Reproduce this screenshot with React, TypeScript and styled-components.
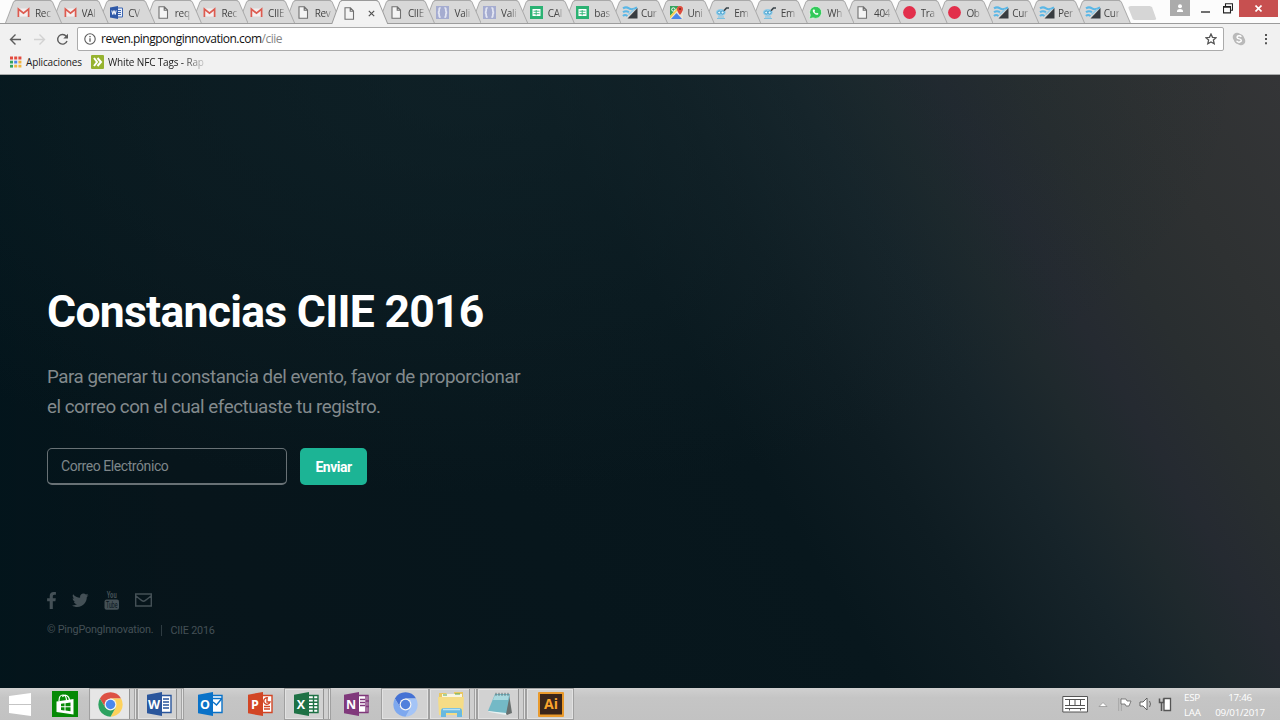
import React from "react";
import styled, { createGlobalStyle, css } from "styled-components";
import { FaTwitter } from "react-icons/fa";

const Global = createGlobalStyle`
  * { box-sizing: border-box; }
  body { margin: 0; overflow: hidden; }
`;

const ui = `"Open Sans", "Noto Sans", sans-serif`;

const Screen = styled.div`
  width: 1280px;
  height: 720px;
  display: flex;
  flex-direction: column;
  overflow: hidden;
`;

/* ---------- browser: tab strip ---------- */

const TabStrip = styled.div`
  height: 24px;
  display: flex;
  align-items: flex-start;
  padding-left: 5px;
  background: #fcfcfc;
  box-shadow: inset 0 -1px #9c9c9c;
`;

const TabBody = styled.div<{ $order: number; $active?: boolean; $light?: boolean }>`
  position: relative;
  z-index: ${(p) => (p.$active ? 40 : 30 - p.$order)};
  flex: none;
  width: 57px;
  height: ${(p) => (p.$active ? 24 : 23)}px;
  margin-right: ${(p) => (p.$order < 19 ? -10.4 : -11.2)}px;
  padding: 2px 0 0 12px;
  display: flex;
  align-items: center;
  background: ${(p) => (p.$active ? "#9a9a9a" : "#a9a9a9")};
  clip-path: polygon(0 100%, 8px 2px, 10px 0, 46px 0, 48px 2px, 100% 100%);

  &::before {
    content: "";
    position: absolute;
    inset: 0;
    background: ${(p) => (p.$active ? "#f2f2f2" : p.$light ? "#e0e0e0" : "#d8d8d8")};
    clip-path: polygon(1px 100%, 9px 2px, 11px 1px, 45px 1px, 47px 2px, calc(100% - 1px) 100%);
  }
  > * { position: relative; }
`;

const TabIcon = styled.svg`
  flex: none;
  width: 13px;
  height: 13px;
  display: block;
  overflow: visible;
`;

const TabTitle = styled.span`
  flex: none;
  margin-left: 5px;
  white-space: nowrap;
  font: 10px/14px ${ui};
  letter-spacing: -0.3px;
  color: #444;
  mask-image: linear-gradient(90deg, #000 60%, rgba(0, 0, 0, 0.25));
`;

const TabClose = styled.svg`
  width: 7px;
  height: 7px;
  margin-left: 12px;
`;

const NewTab = styled.div`
  width: 29px;
  height: 14px;
  margin: 6px 0 0 8px;
  border-radius: 3px;
  background: #d6d6d6;
  clip-path: polygon(0 0, 76% 0, 84% 8%, 100% 100%, 24% 100%, 18% 94%);
`;

const WindowControls = styled.div`
  margin-left: auto;
  padding-right: 2px;
  display: flex;
`;

const Control = styled.div<{ $w: number; $h: number; $bg?: string }>`
  width: ${(p) => p.$w}px;
  height: ${(p) => p.$h}px;
  display: flex;
  align-items: center;
  justify-content: center;
  background: ${(p) => p.$bg ?? "transparent"};
  svg { display: block; }
`;

type IconKind =
  | "gmail" | "word" | "page" | "braces" | "sheet" | "wave" | "maps" | "robot" | "whatsapp" | "dot";

const glyphs: Record<IconKind, React.ReactNode> = {
  gmail: (
    <>
      <path d="M1 2.5h11v8H1z" fill="#f3eeee" />
      <path d="M1.400 11V3l5.100 4.200 5.100-4.200v8" fill="none" stroke="#dd5b50" strokeWidth="1.700" />
    </>
  ),
  word: (
    <>
      <path d="M6 2h6.5v9H6z" fill="#e9effa" stroke="#3c65b0" />
      <path d="M8 4.5h3M8 6.5h3M8 8.5h3" stroke="#3c65b0" />
      <path d="M0 1.5 8 0v13L0 11.5z" fill="#2f59a8" />
      <path d="m1.8 4.5 1 4 1.2-4 1.2 4 1-4" fill="none" stroke="#fff" />
    </>
  ),
  page: <path d="M2 .8h5.4L10.500 4v8.200H2zM7.200 1v3.200h3.300" fill="#f4f4f4" stroke="#707070" strokeWidth="1.1" />,
  braces: (
    <>
      <path d="M0 0h13v13H0z" fill="#a5acd0" />
      <path d="M4.600 1.800Q3 1.800 3.200 4T2 6.500Q3.300 6.800 3.200 9t1.400 2.200M8.400 1.800Q10 1.800 9.800 4T11 6.500Q9.700 6.800 9.800 9t-1.400 2.200" fill="none" stroke="#e2e5f2" strokeWidth="1.800" />
    </>
  ),
  sheet: (
    <>
      <path d="M0 0h13v13H0z" fill="#2bb273" />
      <path d="M2.5 3h8v7h-8z" fill="#fff" />
      <path d="M3.5 5.2h6M3.5 7.7h6M6.2 4v5.4" stroke="#2bb273" strokeWidth=".9" />
    </>
  ),
  wave: (
    <>
      <path d="M0 2.400q3-2 6 0t8-1M0 6.200q3-2 6 0M0 10q2-2 4.500 0" fill="none" stroke="#5bb7e6" strokeWidth="2.100" />
      <path d="M14.500 2v10.500H4.500z" fill="#383c40" />
      <path d="m5.500 8.500 6-5.500" stroke="#8fcbe8" strokeWidth="1.500" />
    </>
  ),
  maps: (
    <>
      <path d="M0 0h13v13H0z" fill="#e8e4da" />
      <path d="M0 0h9L0 10z" fill="#35a45e" />
      <path d="M1 13 6.500 7l5.500 6z" fill="#4a86e8" />
      <path d="m0 10 9-10 1.500 1L0 12.500z" fill="#f7cf4a" />
      <circle cx="3.400" cy="3.500" r="1.700" fill="none" stroke="#fff" />
      <path d="M10 9Q6.800 5 7 3a3 3 0 0 1 6 0q0 2-3 6" fill="#dc4b3e" />
      <circle cx="10" cy="3" r="1" fill="#7d231c" />
    </>
  ),
  robot: (
    <>
      <ellipse cx="4.800" cy="6.500" rx="4.800" ry="3.400" fill="#8fcbe9" />
      <circle cx="3.200" cy="6.500" r="1.500" fill="#e4f5fc" stroke="#2d92c4" strokeWidth=".8" />
      <circle cx="6.600" cy="6.500" r="1.500" fill="#e4f5fc" stroke="#2d92c4" strokeWidth=".8" />
      <path d="M2 11h6M1 12.500h8" stroke="#7cc0e0" />
      <path d="m8 4.800 2.500-2.800H13" fill="none" stroke="#3b454b" strokeWidth="1.700" />
    </>
  ),
  whatsapp: (
    <>
      <path d="m.3 12.900 1-3.700A6 6 0 1 1 4 11.800z" fill="#33c95a" stroke="#eefaf0" strokeWidth=".6" />
      <path d="M4.300 3.600q-1.400 1.500.8 3.700t4 1.200l.3-1-1.500-.8-.8.800Q5.800 6.800 5.500 5.600l.6-.7-.6-1.500z" fill="#fff" />
    </>
  ),
  dot: <circle cx="6.500" cy="6.500" r="6.400" fill="#e22f4b" />,
};

const tabs: { icon: IconKind; title?: string; active?: boolean; light?: boolean }[] = [
  { icon: "gmail", title: "Rec" },
  { icon: "gmail", title: "VAl" },
  { icon: "word", title: "CV" },
  { icon: "page", title: "req", light: true },
  { icon: "gmail", title: "Rec" },
  { icon: "gmail", title: "CIIE" },
  { icon: "page", title: "Rev" },
  { icon: "page", active: true },
  { icon: "page", title: "CIIE" },
  { icon: "braces", title: "Vali" },
  { icon: "braces", title: "Vali" },
  { icon: "sheet", title: "CAl" },
  { icon: "sheet", title: "bas" },
  { icon: "wave", title: "Cur" },
  { icon: "maps", title: "Uni" },
  { icon: "robot", title: "Em" },
  { icon: "robot", title: "Em" },
  { icon: "whatsapp", title: "Wh" },
  { icon: "page", title: "404" },
  { icon: "dot", title: "Tra" },
  { icon: "dot", title: "Ob" },
  { icon: "wave", title: "Cur" },
  { icon: "wave", title: "Per" },
  { icon: "wave", title: "Cur" },
];

/* ---------- browser: address and bookmarks ---------- */

const Toolbar = styled.div`
  height: 51px;
  background: #f1f1f1;
  border-bottom: 1px solid #a9abab;
  display: flex;
  flex-direction: column;
`;

const AddressRow = styled.div`
  height: 27px;
  padding: 3px 11px 0 9px;
  display: flex;
  align-items: center;
`;

const NavIcon = styled.svg`
  flex: none;
  width: 13px;
  height: 13px;
  margin-right: 10.5px;
  fill: none;
  stroke-width: 1.4;
`;

const Address = styled.div`
  flex: none;
  width: 1147px;
  height: 24px;
  margin-left: -2.5px;
  padding: 0 6px 0 6px;
  display: flex;
  align-items: center;
  background: #fff;
  border: 1px solid #ababab;
  border-radius: 2px;
  font: 12px/22px ${ui};
  color: #111;
  svg { flex: none; }
`;

const Url = styled.span`
  margin-left: 5px;
  letter-spacing: -0.49px;
  white-space: nowrap;
  em { font-style: normal; color: #858585; }
`;

const Star = styled.svg` margin-left: auto; `;
const Skype = styled.svg` margin-left: 8px; flex: none; `;
const Dots = styled.svg` margin-left: auto; flex: none; margin-right: 1px;`;

const Bookmarks = styled.div`
  display: flex;
  align-items: center;
  height: 16px;
  margin-top: 3px;
  padding-left: 9px;
  font: 10px/14px ${ui};
  letter-spacing: -0.15px;
  color: #1b1b1b;
`;

const Bookmark = styled.div<{ $width: number; $fade?: boolean }>`
  display: flex;
  align-items: center;
  width: ${(p) => p.$width}px;
  white-space: nowrap;
  gap: 4px;
  ${(p) => p.$fade && css`mask-image: linear-gradient(90deg, #000 80%, rgba(0, 0, 0, 0.15));`}
  svg { flex: none; }
`;

/* ---------- page ---------- */

const Page = styled.main`
  height: 613px;
  padding: 213px 0 0 47px;
  font-family: Roboto, sans-serif;
  background:
    radial-gradient(ellipse 760px 420px at 480px 0, rgba(20, 39, 45, 0.6), rgba(14, 30, 36, 0)),
    linear-gradient(90deg, rgba(0, 21, 28, 0.55), rgba(0, 21, 28, 0) 14%),
    linear-gradient(59deg, #07141a 0%, #07161c 38%, #08171d 54%, #0e1c22 62%, #17242a 70%,
      #1f292d 75%, #252a31 79%, #292e30 84%, #2e3132 90%, #343537 100%);
`;

const Title = styled.h1`
  margin: 0;
  font-size: 44.5px;
  line-height: 48px;
  font-weight: 700;
  letter-spacing: -0.73px;
  color: #fff;
  white-space: nowrap;
`;

const Lead = styled.p`
  margin: 27px 0 0;
  font-size: 18.75px;
  line-height: 29.5px;
  letter-spacing: -0.47px;
  color: #838a8d;
  white-space: nowrap;
`;

const Form = styled.div`
  display: flex;
  gap: 13px;
  margin-top: 26px;
`;

const Field = styled.div`
  width: 240px;
  height: 37px;
  padding-left: 13px;
  border: 1px solid #687175;
  border-bottom-width: 2px;
  border-radius: 5px;
  font-size: 14px;
  line-height: 35px;
  letter-spacing: -0.43px;
  color: #7f878a;
`;

const Submit = styled.button`
  width: 67px;
  height: 37px;
  padding: 0;
  border: 0;
  border-radius: 5px;
  background: #1cb495;
  color: #fff;
  font: 700 14px/36px Roboto, sans-serif;
  letter-spacing: -0.5px;
`;

const Social = styled.div`
  height: 20px;
  margin-top: 105px;
  display: flex;
  align-items: center;
  color: #445056;
  svg { display: block; }
`;

const SocialLink = styled.span<{ $w: number; $gap: number }>`
  width: ${(p) => p.$w}px;
  margin-right: ${(p) => p.$gap}px;
`;

const Copyright = styled.div`
  margin-top: 12px;
  display: flex;
  align-items: center;
  font-size: 10.8px;
  line-height: 16px;
  letter-spacing: -0.2px;
  color: #445056;
  span + span {
    margin-left: 8px;
    padding-left: 8px;
    line-height: 11px;
    border-left: 1px solid #2e3b41;
  }
`;

/* ---------- taskbar ---------- */

const Taskbar = styled.div`
  height: 32px;
  display: flex;
  background: linear-gradient(#d0d0d0, #c5c5c5 30%, #c2c2c2);
`;

const Task = styled.div<{ $w: number; $running?: boolean; $bright?: boolean; $stack?: boolean; $nudge?: number }>`
  position: relative;
  flex: none;
  width: ${(p) => p.$w}px;
  height: 32px;
  display: flex;
  align-items: center;
  justify-content: center;
  padding-right: ${(p) => (p.$stack ? 5 : 0)}px;
  padding-left: ${(p) => p.$nudge ?? 0}px;
  ${(p) => p.$running && css`
    border: 1px solid #a0a0a0;
    box-shadow: inset 0 0 0 1px #e2e2e2;
    background: ${p.$bright ? "#e6e6e6" : "#d2d2d2"};
  `}
  ${(p) => p.$stack && css`
    &::after {
      content: "";
      position: absolute;
      right: 1px;
      top: 0;
      bottom: 0;
      width: 4px;
      background: #cfcfcf;
      border-left: 1px solid #939393;
      border-right: 1px solid #a3a3a3;
    }
  `}
  svg { display: block; flex: none; }
`;

const Tray = styled.div`
  margin-left: auto;
  width: 218px;
  display: flex;
  align-items: center;
  svg { flex: none; }
`;

const TrayText = styled.div<{ $w: number }>`
  width: ${(p) => p.$w}px;
  text-align: center;
  font: 9.8px/15px ${ui};
  letter-spacing: -0.25px;
  color: #fff;
  white-space: nowrap;
  padding-top: 2px;
`;

const OfficeIcon = ({ color, letter, children }: { color: string; letter: string; children: React.ReactNode }) => (
  <svg width="25" height="24" viewBox="0 0 25 24">
    <path d="M12 3.500h12v17H12z" fill="#fff" stroke={color} strokeWidth="1.400" />
    <g stroke={color} fill="none" strokeWidth="1.400">{children}</g>
    <path d="M0 2.700 15 0v24L0 21.300z" fill={color} />
    <text x="7" y="16.500" textAnchor="middle" fontFamily="Open Sans, sans-serif" fontWeight="700" fontSize="12.500" fill="#fff">
      {letter}
    </text>
  </svg>
);

const ChromeIcon = ({ colors, core }: { colors: [string, string, string]; core: string }) => (
  <svg width="25" height="25" viewBox="-12.500 -12.500 25 25">
    <path d="M-10.600-6A12.200 12.200 0 0 1 10.600-6L0-6-5.200 3z" fill={colors[0]} />
    <path d="M10.600-6A12.200 12.200 0 0 1 0 12.200L5.200 3 0-6z" fill={colors[1]} />
    <path d="M0 12.200A12.200 12.200 0 0 1-10.600-6L-5.200 3 5.200 3z" fill={colors[2]} />
    <circle r="5.900" fill="#f4f4f4" />
    <circle r="4.700" fill={core} />
  </svg>
);

export default function App() {
  return (
    <Screen>
      <Global />
      <TabStrip>
        {tabs.map((t, i) => (
          <TabBody key={i} $order={i} $active={t.active} $light={t.light}>
            <TabIcon viewBox="0 0 13 13">{glyphs[t.icon]}</TabIcon>
            {t.title && <TabTitle>{t.title}</TabTitle>}
            {t.active && (
              <TabClose viewBox="0 0 7 7">
                <path d="m.8.8 5.400 5.400m0-5.400L.8 6.200" stroke="#555" strokeWidth="1.200" />
              </TabClose>
            )}
          </TabBody>
        ))}
        <NewTab />
        <WindowControls>
          <Control $w={20} $h={16} $bg="#ababab">
            <svg width="8" height="9" viewBox="0 0 8 9">
              <circle cx="4" cy="2.200" r="2" fill="#fff" />
              <path d="M1 8V6.500Q1.200 5 4 5t3 1.500V8z" fill="#fff" />
            </svg>
          </Control>
          <Control $w={31} $h={18}>
            <svg width="9" height="7" viewBox="0 0 9 7"><path d="M0 6h9" stroke="#222" strokeWidth="1.300" /></svg>
          </Control>
          <Control $w={13} $h={17}>
            <svg width="10" height="11" viewBox="0 0 10 11">
              <path d="M2.500 3V.8h7v6.400H8M.5 3.500h7v6.400h-7zM.5 4.300h7" fill="none" stroke="#222" strokeWidth="1.100" />
            </svg>
          </Control>
          <Control $w={5} $h={17} />
          <Control $w={39} $h={17} $bg="#c75050">
            <svg width="7" height="7" viewBox="0 0 7 7"><path d="m.5.5 6 6m0-6-6 6" stroke="#fff" strokeWidth="1.600" /></svg>
          </Control>
        </WindowControls>
      </TabStrip>

      <Toolbar>
        <AddressRow>
          <NavIcon viewBox="0 0 13 13" stroke="#5c5c5c"><path d="M12 6.500H1.500M6.500 1.500l-5 5 5 5" /></NavIcon>
          <NavIcon viewBox="0 0 13 13" stroke="#d2d2d2"><path d="M1 6.500h10.500M6.500 1.500l5 5-5 5" /></NavIcon>
          <NavIcon viewBox="0 0 13 13" stroke="#5c5c5c">
            <path d="M11 8A4.800 4.800 0 1 1 10.300 3.400" /><path d="M12 .8v4.700H7.300z" fill="#5c5c5c" stroke="none" />
          </NavIcon>
          <Address>
            <svg width="12" height="12" viewBox="0 0 12 12">
              <circle cx="6" cy="6" r="5.200" fill="none" stroke="#5a5a5a" strokeWidth="1.100" />
              <path d="M6 5.300v3.500M6 3v1.300" stroke="#5a5a5a" strokeWidth="1.300" />
            </svg>
            <Url>reven.pingponginnovation.com<em>/ciie</em></Url>
            <Star width="12" height="12" viewBox="0 0 12 12">
              <path d="m6 1 1.500 3.300 3.700.4-2.800 2.400.8 3.600L6 8.900l-3.200 1.800.8-3.600L.8 4.700l3.700-.4z" fill="none" stroke="#555" strokeWidth="1.300" />
            </Star>
          </Address>
          <Skype width="14" height="14" viewBox="0 0 14 14">
            <circle cx="5" cy="5" r="4.300" fill="#b9b9b9" />
            <circle cx="9" cy="9" r="4.300" fill="#b9b9b9" />
            <circle cx="7" cy="7" r="5.300" fill="#b9b9b9" />
            <path d="M9.300 4.900Q8.500 3.700 7 3.800q-2 .1-2 1.500T7.100 6.900q2.200.3 2.200 1.700T7 10.200Q5.300 10.200 4.600 8.800" fill="none" stroke="#fff" strokeWidth="1.400" />
          </Skype>
          <Dots width="4" height="12" viewBox="0 0 4 12">
            <path d="M1 1h2v2H1zM1 5h2v2H1zM1 9.300h2v2H1z" fill="#555" />
          </Dots>
        </AddressRow>
        <Bookmarks>
          <Bookmark $width={82}>
            <svg width="13" height="12" viewBox="0 0 13 12">
              <path d="M1 .6h3v2.800H1zM5.200.6h3v2.800h-3zM9.400.6h3v2.800h-3z" fill="#e34b3e" />
              <path d="M1 4.700h3v2.800H1z" fill="#36a35b" /><path d="M5.200 4.700h3v2.800h-3z" fill="#4a86e8" /><path d="M9.400 4.700h3v2.800h-3z" fill="#f0b23c" />
              <path d="M1 8.800h3v2.800H1z" fill="#36a35b" /><path d="M5.200 8.800h3v2.800h-3zM9.400 8.800h3v2.800h-3z" fill="#efb53f" />
            </svg>
            Aplicaciones
          </Bookmark>
          <Bookmark $width={114} $fade>
            <svg width="13" height="14" viewBox="0 0 13 14">
              <rect width="13" height="14" rx="1" fill="#96b32f" />
              <path d="m3 3 3 4-3 4M6.500 3l3.500 4-3.500 4" fill="none" stroke="#fff" strokeWidth="2" />
            </svg>
            White NFC Tags - Rap
          </Bookmark>
        </Bookmarks>
      </Toolbar>

      <Page>
        <Title>Constancias CIIE 2016</Title>
        <Lead>
          Para generar tu constancia del evento, favor de proporcionar
          <br />
          el correo con el cual efectuaste tu registro.
        </Lead>
        <Form>
          <Field>Correo Electrónico</Field>
          <Submit>Enviar</Submit>
        </Form>
        <Social>
          <SocialLink $w={10} $gap={15}>
            <svg width="9" height="17" viewBox="95 0 864 1664" fill="#445056">
              <path d="M959 12v264h-157q-86 0-116 36t-30 108v189h293l-39 296h-254v759h-306v-759h-255v-296h255v-218q0-186 104-288.500t277-102.500q147 0 228 12z" />
            </svg>
          </SocialLink>
          <SocialLink $w={17} $gap={15}><FaTwitter size={16.5} /></SocialLink>
          <SocialLink $w={16} $gap={15}>
            <svg width="16" height="19" viewBox="0 0 16 19">
              <text x="7.700" y="7.300" textAnchor="middle" textLength="10" lengthAdjust="spacingAndGlyphs" fontFamily="Roboto, sans-serif" fontWeight="700" fontSize="9.500" fill="#445056">You</text>
              <rect x=".5" y="8.500" width="14.500" height="10.300" rx="2" fill="#445056" />
              <text x="7.800" y="16.800" textAnchor="middle" textLength="11.500" lengthAdjust="spacingAndGlyphs" fontFamily="Roboto, sans-serif" fontWeight="400" fontSize="8.500" fill="#08161c">Tube</text>
            </svg>
          </SocialLink>
          <SocialLink $w={17} $gap={0}>
            <svg width="17" height="14" viewBox="0 0 17 14">
              <path d="M.7 1h15.600v12H.7zM.7 2.700q3 2.500 6.200 4.900 1.600 1.200 3.200 0 3.200-2.400 6.200-4.900" fill="none" stroke="#445056" strokeWidth="1.400" />
            </svg>
          </SocialLink>
        </Social>
        <Copyright><span>© PingPongInnovation.</span><span>CIIE 2016</span></Copyright>
      </Page>

      <Taskbar>
        <Task $w={40}>
          <svg width="22" height="23" viewBox="0 0 22 23"><path d="M0 3 22 0v11H0zM0 12h22v11L0 20z" fill="#fff" /></svg>
        </Task>
        <Task $w={49}>
          <svg width="26" height="26" viewBox="0 0 26 26">
            <path d="M0 0h26v26H0z" fill="#068a06" />
            <path d="m4.500 10.500 17-2.500v15.500L4.500 21z" fill="#fff" />
            <path d="M7 10q0-6 4-6 3 0 3.500 5M10.500 6q1.500-2.500 4-1.500T17.500 9" fill="none" stroke="#fff" strokeWidth="1.200" />
            <path d="m9 12.800 3.500-.5v3H9zM13.500 12.200l5-.7v3.800h-5zM9 16.300h3.500v3.200L9 19zM13.500 16.300h5v4l-5-.7z" fill="#068a06" />
          </svg>
        </Task>
        <Task $w={48} $running $bright $stack><ChromeIcon colors={["#dd5144", "#fdd25c", "#2da260"]} core="#4a88ef" /></Task>
        <Task $w={47} $running $stack $nudge={3}>
          <OfficeIcon color="#2a569c" letter="W"><path d="M16 7h6M16 10h6M16 13h6M16 16h6" /></OfficeIcon>
        </Task>
        <Task $w={50} $nudge={3}>
          <OfficeIcon color="#0a72c8" letter="O"><path d="M15 6.500h9M15 10l3.500 3 5-6" /></OfficeIcon>
        </Task>
        <Task $w={50} $nudge={2}>
          <OfficeIcon color="#d24625" letter="P"><path d="M20 6a3.200 3.200 0 1 0 2 4h-3V6M16 14.500h6M16 17h6" /></OfficeIcon>
        </Task>
        <Task $w={47} $running $stack $nudge={2}>
          <OfficeIcon color="#1e7145" letter="X"><path d="M15 7h9M15 10.300h9M15 13.600h9M15 17h9M19.500 4v16" /></OfficeIcon>
        </Task>
        <Task $w={50} $nudge={1}>
          <OfficeIcon color="#80397b" letter="N"><path d="M16 7.500h5M16 10.500h5M16 13.500h5M22 4v16M22 9h3M22 14.500h3" /></OfficeIcon>
        </Task>
        <Task $w={48} $running><ChromeIcon colors={["#4471d4", "#a4c4f6", "#7da8ef"]} core="#5080dc" /></Task>
        <Task $w={48} $running $stack $nudge={2}>
          <svg width="27" height="27" viewBox="0 0 27 27">
            <path d="M1 4V2h7l2 2h6V1h9v22H1z" fill="#e9c862" />
            <path d="M4 3h20v6H4z" fill="#f8f5e4" /><path d="M5 4h4M17 3h5" stroke="#56a855" />
            <path d="M0 6h26l-1 18H1z" fill="#f5dc86" />
            <path d="M3 26v-6q0-3 3-3h15q3 0 3 3v6h-5v-4H8v4z" fill="#69b9df" /><path d="M5 18.500h17" stroke="#b9e3f4" strokeWidth="1.500" />
          </svg>
        </Task>
        <Task $w={49} $running $stack $nudge={2}>
          <svg width="26" height="24" viewBox="0 0 26 24">
            <path d="m22 2 3 19-5 2-3-4z" fill="#69706f" />
            <path d="M8 2h15l-4 20L1 19z" fill="#74b9c6" /><path d="M8 3h14l-1 5H6z" fill="#a9d9df" />
            <path d="m1 19 18 2v2L2 20z" fill="#e8f2f2" /><path d="M9 .8v3M12 .8v3M15 .8v3M18 .8v3M21 .8v3" stroke="#5f7376" />
          </svg>
        </Task>
        <Task $w={48} $running $nudge={2}>
          <svg width="26" height="25" viewBox="0 0 26 25">
            <rect width="26" height="25" rx="1" fill="#e99a2d" /><path d="M2 2h22v20.500H2z" fill="#39251b" />
            <text x="13" y="17" textAnchor="middle" fontFamily="Open Sans, sans-serif" fontWeight="700" fontSize="14" fill="#f8a42d">Ai</text>
          </svg>
        </Task>
        <Tray>
          <svg width="122" height="20" viewBox="0 0 122 20">
            <path d="M.8 2.500h24.700v15.500H.8z" fill="#fff" stroke="#555" />
            <path d="M3 5.500h20M3 11.500h20M3 14.500h20M7.500 5.500v6M13 5.500v6M18.500 5.500v6M7.500 14.500v2M18.500 14.500v2" stroke="#555" />
            <path d="m37 12.500 4-4 4 4z" fill="#fff" stroke="#8c8c8c" strokeWidth=".7" />
            <path d="M58 4v13" stroke="#606060" strokeWidth="2.500" /><path d="M58 4v13" stroke="#fff" strokeWidth="1.200" />
            <path d="M59 5h5l1 2h4l-2 5h-3l-1-2h-4z" fill="#fff" stroke="#666" strokeWidth=".8" />
            <path d="M78 8h3l4-4v12l-4-4h-3z" fill="#fff" stroke="#555" strokeWidth=".9" /><path d="M87.500 7q2 3 0 6" fill="none" stroke="#666" />
            <path d="M102 4.500h6.500v12H102z" fill="#fff" stroke="#555" strokeWidth="1.300" /><path d="M99.500 8v9M97.500 4.500v4h4V4.500" fill="none" stroke="#555" strokeWidth="1.500" />
          </svg>
          <TrayText $w={16}>ESP<br />LAA</TrayText>
          <TrayText $w={80}>17:46<br />09/01/2017</TrayText>
        </Tray>
      </Taskbar>
    </Screen>
  );
}
